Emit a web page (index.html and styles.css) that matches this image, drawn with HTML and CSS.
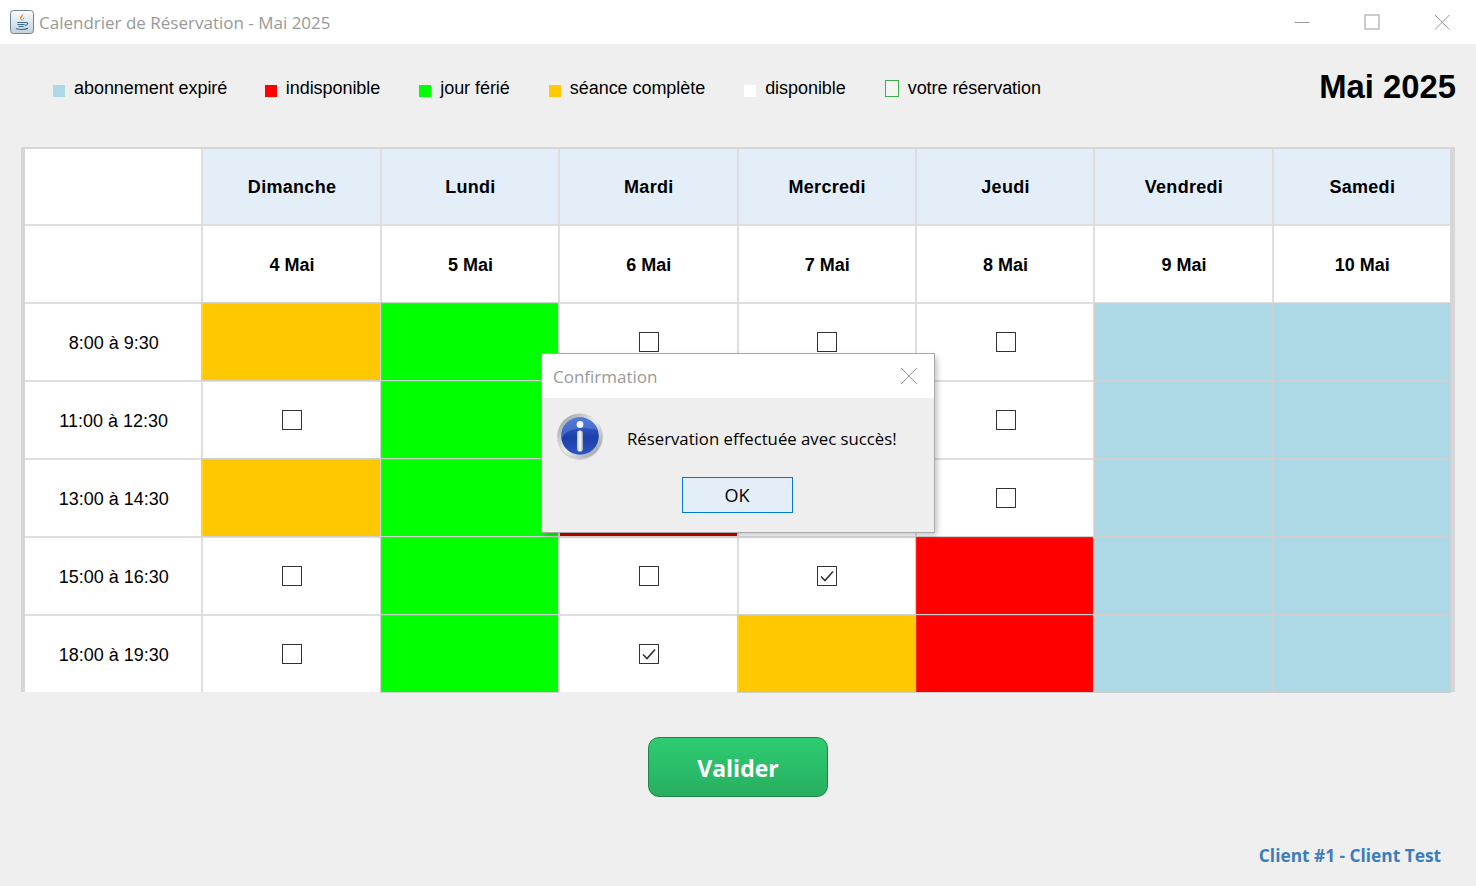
FILE: index.html
```html
<!DOCTYPE html>
<html lang="fr">
<head>
    <meta charset="UTF-8">
    <meta name="viewport" content="width=device-width, initial-scale=1.0">
    <title>Calendrier de Réservation - Mai 2025</title>
    <link rel="stylesheet" href="styles.css">
</head>
<body>
    <svg class="defs" width="0" height="0">
        <symbol id="tick" viewBox="0 0 18 18"><path d="M3 9.500 7 13.500 15 4.500" fill="none" stroke="#333" stroke-width="1.600"/></symbol>
    </svg>

    <header class="titlebar">
        <svg class="app-icon" width="24" height="24" viewBox="0 0 24 24">
            <defs>
                <linearGradient id="appBg" x1="0" y1="0" x2="0" y2="1"><stop offset="0" stop-color="#fbfcfd"/><stop offset="1" stop-color="#c3d0dc"/></linearGradient>
            </defs>
            <rect x="0.500" y="0.500" width="23" height="23" rx="3" fill="url(#appBg)" stroke="#6f8396"/>
            <path d="M13 3.500c1.500 2-2.500 3.200-1.500 5.500 .4 1 1 1.500 1.200 2-2.200-1.200-3.400-2.600-2.200-4.300C11.500 5.300 13 5 13 3.500z" fill="#e8761c"/>
            <path d="M15 7c-2 .8-3 1.700-2 3.500-.2-.5 .2-1.800 2-3.500z" fill="#e8761c"/>
            <path d="M7 12.500h8.500M7.500 14.500h7M8.500 16.500h5M15.500 12.500c3 -.5 3 2.500 -.8 3M6 18.500c3 1.300 9 1.300 12 -.3" fill="none" stroke="#3a6d96" stroke-width="1.100"/>
        </svg>
        <span class="window-title">Calendrier de Réservation - Mai 2025</span>
        <div class="window-buttons">
            <svg width="16" height="16" viewBox="0 0 16 16"><path d="M0.500 8.500H15.500" stroke="#999" fill="none"/></svg>
            <svg width="16" height="16" viewBox="0 0 16 16"><rect x="1" y="1" width="14" height="14" stroke="#999" fill="none"/></svg>
            <svg width="16" height="16" viewBox="0 0 16 16"><path d="M1 1 15.500 15.500M15.500 1 1 15.500" stroke="#999" fill="none"/></svg>
        </div>
    </header>

    <main class="content">
        <div class="top-row">
            <ul class="legend">
                <li><i class="swatch expired"></i>abonnement expiré</li>
                <li><i class="swatch off"></i>indisponible</li>
                <li><i class="swatch holiday"></i>jour férié</li>
                <li><i class="swatch full"></i>séance complète</li>
                <li><i class="swatch free"></i>disponible</li>
                <li><i class="swatch mine"></i>votre réservation</li>
            </ul>
            <h1 class="month">Mai 2025</h1>
        </div>

        <div class="calendar">
            <div class="cell"></div>
            <div class="cell head">Dimanche</div>
            <div class="cell head">Lundi</div>
            <div class="cell head">Mardi</div>
            <div class="cell head">Mercredi</div>
            <div class="cell head">Jeudi</div>
            <div class="cell head">Vendredi</div>
            <div class="cell head">Samedi</div>

            <div class="cell"></div>
            <div class="cell date">4 Mai</div>
            <div class="cell date">5 Mai</div>
            <div class="cell date">6 Mai</div>
            <div class="cell date">7 Mai</div>
            <div class="cell date">8 Mai</div>
            <div class="cell date">9 Mai</div>
            <div class="cell date">10 Mai</div>

            <div class="cell">8:00 à 9:30</div>
            <div class="cell full"></div>
            <div class="cell holiday"></div>
            <div class="cell"><span class="check"></span></div>
            <div class="cell"><span class="check"></span></div>
            <div class="cell"><span class="check"></span></div>
            <div class="cell expired"></div>
            <div class="cell expired"></div>

            <div class="cell">11:00 à 12:30</div>
            <div class="cell"><span class="check"></span></div>
            <div class="cell holiday"></div>
            <div class="cell"><span class="check"></span></div>
            <div class="cell"><span class="check"></span></div>
            <div class="cell"><span class="check"></span></div>
            <div class="cell expired"></div>
            <div class="cell expired"></div>

            <div class="cell">13:00 à 14:30</div>
            <div class="cell full"></div>
            <div class="cell holiday"></div>
            <div class="cell off-dark"></div>
            <div class="cell"><span class="check"></span></div>
            <div class="cell"><span class="check"></span></div>
            <div class="cell expired"></div>
            <div class="cell expired"></div>

            <div class="cell">15:00 à 16:30</div>
            <div class="cell"><span class="check"></span></div>
            <div class="cell holiday"></div>
            <div class="cell"><span class="check"></span></div>
            <div class="cell"><span class="check"><svg width="18" height="18"><use href="#tick"/></svg></span></div>
            <div class="cell off"></div>
            <div class="cell expired"></div>
            <div class="cell expired"></div>

            <div class="cell">18:00 à 19:30</div>
            <div class="cell"><span class="check"></span></div>
            <div class="cell holiday"></div>
            <div class="cell"><span class="check"><svg width="18" height="18"><use href="#tick"/></svg></span></div>
            <div class="cell full"></div>
            <div class="cell off"></div>
            <div class="cell expired"></div>
            <div class="cell expired"></div>
        </div>

        <div class="actions">
            <button class="validate">Valider</button>
        </div>
        <p class="client">Client #1 - Client Test</p>
    </main>

    <div class="dialog">
        <div class="dialog-title">
            <span>Confirmation</span>
            <svg width="18" height="18" viewBox="0 0 18 18"><path d="M1 1 17 17M17 1 1 17" stroke="#999" fill="none"/></svg>
        </div>
        <div class="dialog-body">
            <div class="dialog-message">
                <svg class="info-icon" width="48" height="48" viewBox="0 0 48 48">
                    <defs>
                        <linearGradient id="ring" x1="0" y1="0" x2="1" y2="1"><stop offset="0" stop-color="#8a929e"/><stop offset=".5" stop-color="#eceef0"/><stop offset="1" stop-color="#8b8f96"/></linearGradient>
                        <linearGradient id="ball" x1="0" y1="0" x2="0" y2="1"><stop offset="0" stop-color="#3a68d0"/><stop offset=".55" stop-color="#1d3fa8"/><stop offset="1" stop-color="#2b55c8"/></linearGradient>
                        <linearGradient id="stem" x1="0" y1="0" x2="1" y2="0"><stop offset="0" stop-color="#b9bdc8"/><stop offset=".5" stop-color="#fff"/><stop offset="1" stop-color="#9aa2b2"/></linearGradient>
                    </defs>
                    <circle cx="24" cy="25" r="23" fill="#000" opacity=".12"/>
                    <circle cx="24" cy="24" r="22.500" fill="url(#ring)"/>
                    <circle cx="24" cy="24" r="18.800" fill="url(#ball)"/>
                    <path d="M5.500 27C9 17 24 14 42 18 38 9 30 5.500 24 5.500 13 5.500 5 14 5.500 27z" fill="#6d92e6" opacity=".45"/>
                    <circle cx="24" cy="12.500" r="3.400" fill="#f4f5f8"/>
                    <rect x="21" y="18.500" width="6" height="21" rx="2.800" fill="url(#stem)"/>
                </svg>
                <span class="message-text">Réservation effectuée avec succès!</span>
            </div>
            <button class="dialog-ok">OK</button>
        </div>
    </div>
</body>
</html>
```

FILE: styles.css
```css
*{
    box-sizing: border-box;
}
body{
    margin: 0;
    height: 886px;
    overflow: hidden;
    background-color: #efefef;
    font-family: "Liberation Sans", Arial, sans-serif;
    color: #000;
}
.defs{
    display: none;
}

/* window bar */
.titlebar{
    height: 44px;
    background-color: #fff;
    display: flex;
    align-items: center;
    padding: 0 26px 0 10px;
}
.app-icon{
    margin-right: 5px;
}
.window-title{
    font-family: "Open Sans", sans-serif;
    font-size: 17px;
    color: #999;
}
.window-buttons{
    margin-left: auto;
    display: flex;
    gap: 54px;
}

/* legend and month */
.content{
    padding: 0 21px;
}
.top-row{
    height: 103px;
    display: flex;
    align-items: center;
    justify-content: space-between;
    padding: 0 0 14px 32px;
}
.legend{
    list-style: none;
    margin: 0;
    padding: 0;
    display: flex;
    gap: 39px;
    font-size: 18px;
    letter-spacing: -0.05px;
}
.legend li{
    display: flex;
    align-items: center;
}
.legend li:first-child{
    margin-right: -1.500px;
}
.swatch{
    width: 12px;
    height: 12px;
    margin: 5px 9px 0 0;
}
.swatch.mine{
    width: 14px;
    height: 17px;
    margin: 0 9px 0 0;
    border: 1px solid #3fae49;
    background-color: #f4f4f4;
}
.swatch.free{
    background-color: #fff;
}
.month{
    margin: 0 -1px 4px 0;
    font-size: 32.800px;
}

/* calendar grid */
.calendar{
    display: grid;
    grid-template-columns: repeat(8, 1fr);
    grid-template-rows: 75px repeat(6, 76px);
    gap: 2px;
    background-color: #dedede;
    border-style: solid;
    border-color: #d6d6d6;
    border-width: 2px 5px 0 4px;
    font-size: 18px;
}
.cell{
    background-color: #fff;
    display: flex;
    align-items: center;
    justify-content: center;
    padding: 2px 0 0 1px;
}
.head{
    background-color: #e4eef8;
    font-weight: bold;
    letter-spacing: 0.3px;
}
.date{
    font-weight: bold;
}
.check{
    width: 20px;
    height: 20px;
    margin-top: -2px;
    border: 1px solid #333;
    background-color: #fff;
    display: flex;
    align-items: center;
    justify-content: center;
}
.expired{
    background-color: #add8e6;
}
.off{
    background-color: #ff0000;
}
.off-dark{
    background-color: #cc0000;
}
.holiday{
    background-color: #00ff00;
}
.full{
    background-color: #ffc800;
}
.cell.expired{
    outline: 1px solid #cfcfcf;
}
.cell.full,
.cell.off,
.cell.holiday{
    margin: -1px 0 0 -1px;
    outline: 1px solid #cfcfcf;
    box-shadow: inset 1px 1px 0 rgba(255, 255, 255, 0.12);
}

/* bottom */
.actions{
    display: flex;
    justify-content: center;
    margin-top: 45px;
}
.validate{
    width: 180px;
    height: 60px;
    border: 1.500px solid #1e8449;
    border-radius: 11px;
    background: linear-gradient(#2ecc71, #27ae60);
    color: #fff;
    font-family: "Open Sans", sans-serif;
    font-size: 23px;
    font-weight: bold;
    padding-top: 3px;
}
.client{
    margin: 47px 14px 0 0;
    text-align: right;
    font-family: "Open Sans", sans-serif;
    font-size: 17.300px;
    font-weight: bold;
    color: #3b7dba;
}

/* message box, lies over the calendar */
.dialog{
    position: absolute;
    left: 542px;
    top: 354px;
    width: 392px;
    height: 178px;
    background-color: #eee;
    outline: 1px solid #a9a9a9;
    box-shadow: 3px 3px 6px rgba(0, 0, 0, 0.25);
}
.dialog-title{
    height: 44px;
    background-color: #fff;
    display: flex;
    align-items: center;
    justify-content: space-between;
    padding: 0 16px 0 11px;
    font-family: "Open Sans", sans-serif;
    font-size: 17px;
    color: #999;
}
.dialog-body{
    display: flex;
    flex-direction: column;
    align-items: center;
}
.dialog-message{
    align-self: stretch;
    display: flex;
    align-items: center;
    height: 79px;
    padding: 0 0 4px 14px;
}
.message-text{
    margin: 5px 0 0 23px;
    font-family: "Open Sans", sans-serif;
    font-size: 16.750px;
}
.dialog-ok{
    width: 111px;
    height: 36px;
    margin-left: -2px;
    border: 1px solid #0078d7;
    background-color: #e4eef8;
    font-family: "Open Sans", sans-serif;
    font-size: 18px;
    color: #000;
}
```
